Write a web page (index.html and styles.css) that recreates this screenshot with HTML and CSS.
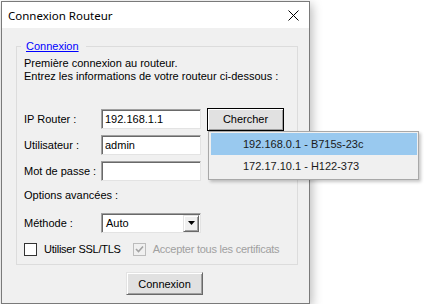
FILE: index.html
```html
<!DOCTYPE html>
<html>
<head>
    <title>Connexion Routeur</title>
    <meta charset="UTF-8">
    <link rel="stylesheet" href="styles.css">
</head>
<body>
    <!-- Dialog window -->
    <div class="window">
        <div class="title-bar">
            <span class="title">Connexion Routeur</span>
            <svg class="close-icon" width="11" height="11" viewBox="0 0 11 11">
                <path d="M0.5 0.5 L10.5 10.5 M10.5 0.5 L0.5 10.5" stroke="#000" stroke-width="1" fill="none"/>
            </svg>
        </div>
        <div class="dialog-body">
            <fieldset class="group-box">
                <legend class="group-title">Connexion</legend>
                <p class="intro">Première connexion au routeur.<br>Entrez les informations de votre routeur ci-dessous :</p>

                <div class="form-row first-row">
                    <label class="field-label" for="ipRouter">IP Router :</label>
                    <input class="text-box" id="ipRouter" type="text" value="192.168.1.1">
                    <div class="search-wrap">
                        <button class="win-button default-button">Chercher</button>
                        <!-- Results list opened under the button -->
                        <ul class="result-list">
                            <li class="result-item selected">192.168.0.1 - B715s-23c</li>
                            <li class="result-item">172.17.10.1 - H122-373</li>
                        </ul>
                    </div>
                </div>
                <div class="form-row">
                    <label class="field-label" for="user">Utilisateur :</label>
                    <input class="text-box" id="user" type="text" value="admin">
                </div>
                <div class="form-row">
                    <label class="field-label" for="password">Mot de passe :</label>
                    <input class="text-box" id="password" type="password" value="">
                </div>

                <p class="options-title">Options avancées :</p>

                <div class="form-row method-row">
                    <span class="field-label">Méthode :</span>
                    <div class="combo-box">
                        <span class="combo-text">Auto</span>
                        <span class="combo-arrow">
                            <svg width="7" height="4" viewBox="0 0 7 4"><path d="M0 0 H7 L3.5 4 Z" fill="#000"/></svg>
                        </span>
                    </div>
                </div>

                <div class="check-row">
                    <span class="check-box"></span>
                    <span class="check-label">Utiliser SSL/TLS</span>
                    <span class="check-box disabled">
                        <svg width="9" height="9" viewBox="0 0 9 9"><path d="M1 4 L3.5 6.5 L8 1.5" stroke="#a3a3a3" stroke-width="1.6" fill="none"/></svg>
                    </span>
                    <span class="check-label disabled-text">Accepter tous les certificats</span>
                </div>
            </fieldset>

            <button class="win-button connect-button">Connexion</button>
        </div>
    </div>
</body>
</html>
```

FILE: styles.css
```css
body {
    margin: 0;
    background: #fff;
    font-family: "Liberation Sans", Arial, sans-serif;
    font-size: 11px;
    color: #000;
}
.window {
    box-sizing: border-box;
    width: 309px;
    height: 303px;
    margin: 1px 0 0 1px;
    border: 1px solid #7a7a7a;
    background: #f0f0f0;
    box-shadow: 2px 3px 10px rgba(0, 0, 0, 0.28);
}
.title-bar {
    height: 26px;
    background: #fff;
    display: flex;
    align-items: center;
    justify-content: space-between;
    padding: 0 10px 0 6px;
}
.title {
    font-family: "Noto Sans", sans-serif;
    font-size: 11.5px;
    color: #000;
}
.close-icon {
    display: block;
    margin-top: 1px;
}
.dialog-body {
    padding: 0 11px 0 14px;
}
.group-box {
    margin: 12px 0 0 0;
    padding: 4px 7px 8px 7px;
    border: 1px solid #dcdcdc;
    min-width: 0;
}
.group-title {
    margin-left: -3px;
    padding: 0 7px 0 5px;
    line-height: 13px;
    color: #0000ff;
    text-decoration: underline;
}
.intro {
    margin: 0;
    line-height: 13px;
    white-space: nowrap;
}
.form-row {
    display: flex;
    align-items: center;
    height: 20px;
    margin-top: 6px;
}
.first-row {
    margin-top: 26px;
}
.field-label {
    width: 77px;
    flex: none;
    line-height: 13px;
    white-space: nowrap;
}
.text-box {
    box-sizing: border-box;
    width: 100px;
    height: 20px;
    margin: 0;
    padding: 0 3px;
    border: 1px solid;
    border-color: #a0a0a0 #e3e3e3 #e3e3e3 #a0a0a0;
    box-shadow: inset 1px 1px 0 #696969;
    background: #fff;
    font-family: "Liberation Sans", Arial, sans-serif;
    font-size: 11px;
    color: #000;
    outline: none;
}
.search-wrap {
    position: relative;
    margin-left: 6px;
}
.win-button {
    box-sizing: border-box;
    display: block;
    width: 77px;
    height: 23px;
    padding: 0;
    background: #e1e1e1;
    font-family: "Liberation Sans", Arial, sans-serif;
    font-size: 11px;
    color: #000;
    border: 1px solid;
    border-color: #e3e3e3 #696969 #696969 #e3e3e3;
    box-shadow: inset 1px 1px 0 #fff, inset -1px -1px 0 #a0a0a0;
}
.default-button {
    border-color: #000;
}
.result-list {
    position: absolute;
    top: 23px;
    left: 1px;
    box-sizing: border-box;
    width: 211px;
    margin: 0;
    padding: 1px 1px 2px 2px;
    list-style: none;
    background: #f0f0f0;
    border: 1px solid #a8a8a8;
    box-shadow: 2px 2px 3px rgba(0, 0, 0, 0.22);
}
.result-item {
    height: 22px;
    line-height: 22px;
    padding-left: 32px;
    color: #1a1a1a;
    white-space: nowrap;
}
.result-item.selected {
    background: #99c9ef;
}
.options-title {
    margin: 8px 0 0 0;
    line-height: 13px;
}
.method-row {
    margin-top: 11px;
}
.combo-box {
    box-sizing: border-box;
    width: 100px;
    height: 20px;
    display: flex;
    align-items: center;
    justify-content: space-between;
    border: 1px solid;
    border-color: #a0a0a0 #e3e3e3 #e3e3e3 #a0a0a0;
    box-shadow: inset 1px 1px 0 #696969;
    background: #fff;
    padding: 1px 1px 1px 4px;
}
.combo-text {
    line-height: 13px;
}
.combo-arrow {
    box-sizing: border-box;
    width: 16px;
    height: 17px;
    display: flex;
    align-items: center;
    justify-content: center;
    background: #f0f0f0;
    border: 1px solid;
    border-color: #e3e3e3 #696969 #696969 #e3e3e3;
    box-shadow: inset 1px 1px 0 #fff, inset -1px -1px 0 #a0a0a0;
}
.check-row {
    display: flex;
    align-items: center;
    height: 13px;
    margin-top: 10px;
    white-space: nowrap;
}
.check-box {
    box-sizing: border-box;
    width: 13px;
    height: 13px;
    flex: none;
    border: 1px solid #333;
    background: #fff;
    display: flex;
    align-items: center;
    justify-content: center;
}
.check-box.disabled {
    margin-left: 12px;
    border-color: #bcbcbc;
    background: #f0f0f0;
}
.check-label {
    margin-left: 7px;
    line-height: 13px;
    flex: none;
    letter-spacing: -0.25px;
}
.disabled-text {
    color: #a0a0a0;
}
.connect-button {
    margin: 7px 0 0 110px;
    height: 23px;
}
```
